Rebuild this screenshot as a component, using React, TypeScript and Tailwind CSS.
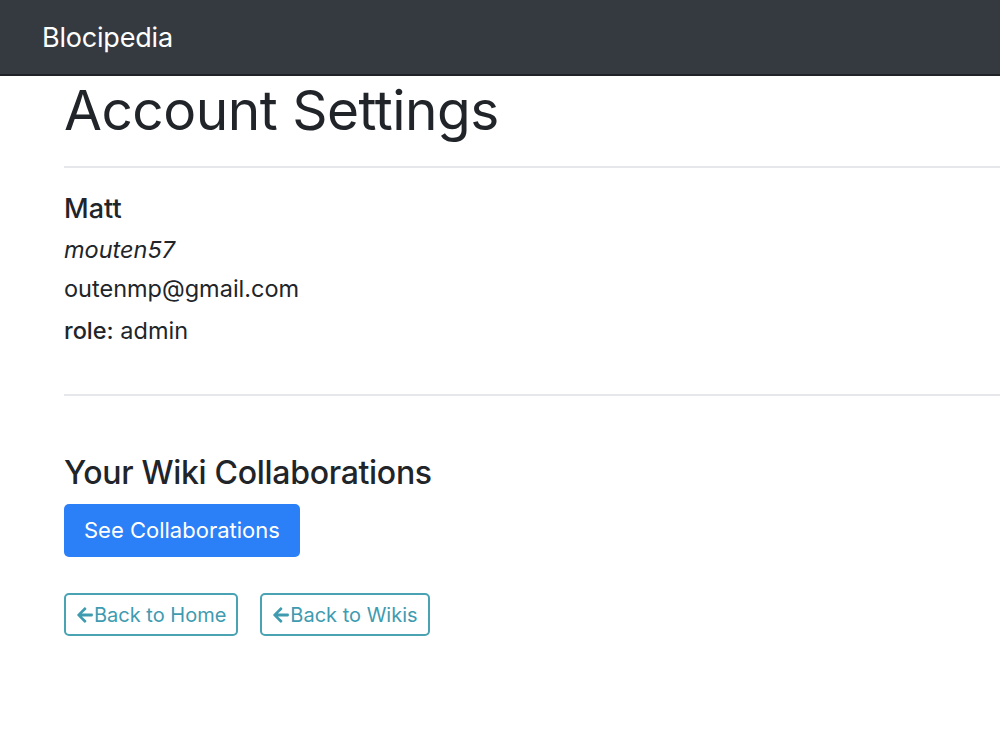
import { FaArrowLeft } from "react-icons/fa";

export default function App() {
  return (
    <div className="min-h-[750px] bg-white font-['Inter',sans-serif] text-[#212529]">
      <nav className="h-[76px] bg-[#343a40] border-b-2 border-[#1f2226] flex items-center px-[42px] pt-[3px]">
        <span className="text-white text-[27px] tracking-[-0.2px]">Blocipedia</span>
      </nav>
      <div className="pl-[64px]">
        <h1 className="text-[55px] font-normal leading-[68px] tracking-[-0.5px]">
          Account Settings
        </h1>
        <hr className="border-t-2 border-[#e5e7ea] mt-[22px]" />
        <div className="pt-[25px] pb-[44px] flex flex-col">
          <h4 className="text-[27px] font-medium leading-[32px]">Matt</h4>
          <p className="text-[23.5px] italic mt-[5px] leading-[39px]">mouten57</p>
          <p className="text-[23.5px] leading-[39px]">outenmp@gmail.com</p>
          <p className="text-[23.5px] mt-[3px] leading-[39px]">
            <span className="font-medium">role:</span> admin
          </p>
        </div>
        <hr className="border-t-2 border-[#e5e7ea]" />
        <h3 className="text-[32px] font-medium leading-[38px] mt-[58px] tracking-[-0.3px]">
          Your Wiki Collaborations
        </h3>
        <button className="mt-[12px] bg-[#2b7ff7] text-white text-[22px] rounded-[5px] h-[53px] px-[20px]">
          See Collaborations
        </button>
        <div className="flex gap-[22px] mt-[36px]">
          <a className="flex items-center h-[43px] px-[10px] border-2 border-[#4aa3b3] rounded-[5px] text-[#3e9bb0] text-[20px]">
            <FaArrowLeft className="w-[18px] h-[18px]" />
            Back to Home
          </a>
          <a className="flex items-center h-[43px] px-[10px] border-2 border-[#4aa3b3] rounded-[5px] text-[#3e9bb0] text-[20px]">
            <FaArrowLeft className="w-[18px] h-[18px]" />
            Back to Wikis
          </a>
        </div>
      </div>
    </div>
  );
}
